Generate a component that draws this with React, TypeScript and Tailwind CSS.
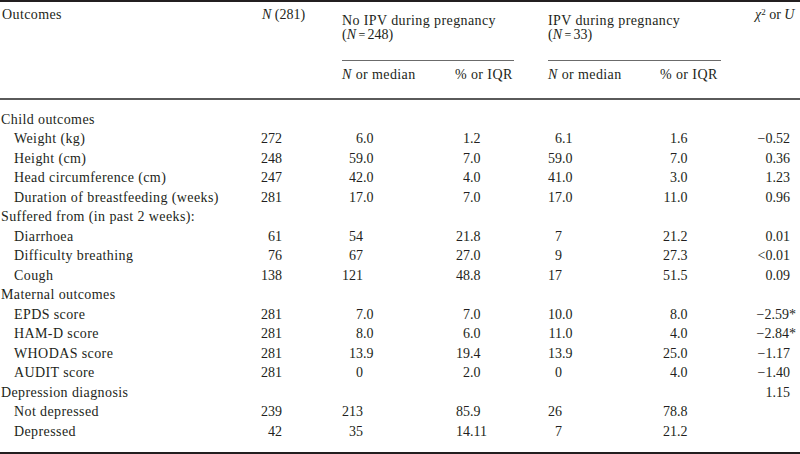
import React from "react";

type Row = {
  label: string;
  cat?: boolean;
  n?: string;
  a?: string;
  b?: string;
  c?: string;
  d?: string;
  chi?: string;
};

const rows: Row[] = [
  { label: "Child outcomes", cat: true },
  { label: "Weight (kg)", n: "272", a: "6.0", b: "1.2", c: "6.1", d: "1.6", chi: "−0.52" },
  { label: "Height (cm)", n: "248", a: "59.0", b: "7.0", c: "59.0", d: "7.0", chi: "0.36" },
  { label: "Head circumference (cm)", n: "247", a: "42.0", b: "4.0", c: "41.0", d: "3.0", chi: "1.23" },
  { label: "Duration of breastfeeding (weeks)", n: "281", a: "17.0", b: "7.0", c: "17.0", d: "11.0", chi: "0.96" },
  { label: "Suffered from (in past 2 weeks):", cat: true },
  { label: "Diarrhoea", n: "61", a: "54", b: "21.8", c: "7", d: "21.2", chi: "0.01" },
  { label: "Difficulty breathing", n: "76", a: "67", b: "27.0", c: "9", d: "27.3", chi: "<0.01" },
  { label: "Cough", n: "138", a: "121", b: "48.8", c: "17", d: "51.5", chi: "0.09" },
  { label: "Maternal outcomes", cat: true },
  { label: "EPDS score", n: "281", a: "7.0", b: "7.0", c: "10.0", d: "8.0", chi: "−2.59*" },
  { label: "HAM-D score", n: "281", a: "8.0", b: "6.0", c: "11.0", d: "4.0", chi: "−2.84*" },
  { label: "WHODAS score", n: "281", a: "13.9", b: "19.4", c: "13.9", d: "25.0", chi: "−1.17" },
  { label: "AUDIT score", n: "281", a: "0", b: "2.0", c: "0", d: "4.0", chi: "−1.40" },
  { label: "Depression diagnosis", cat: true, chi: "1.15" },
  { label: "Not depressed", n: "239", a: "213", b: "85.9", c: "26", d: "78.8" },
  { label: "Depressed", n: "42", a: "35", b: "14.11", c: "7", d: "21.2" },
];

function Num({ v, w }: { v?: string; w: string }) {
  if (!v) return <div />;
  const [i, f] = v.split(".");
  return (
    <div className="flex whitespace-nowrap">
      <span className={`${w} inline-block text-right`}>{i}</span>
      {f !== undefined && <span>.{f}</span>}
    </div>
  );
}

function Chi({ v }: { v?: string }) {
  if (!v) return <div />;
  const star = v.endsWith("*");
  const t = star ? v.slice(0, -1) : v;
  return (
    <div className="pr-[10px] text-right whitespace-nowrap">
      {t}
      {star && <span className="-mr-[6px]">*</span>}
    </div>
  );
}

export default function App() {
  return (
    <div
      className="h-[454px] w-[800px] overflow-hidden bg-white text-[14px] text-[#231f20]"
      style={{ fontFamily: '"Liberation Serif", "Times New Roman", serif' }}
    >
      <div className="h-[2px] bg-[#231f20]" />
      {/* header */}
      <div className="grid h-[96px] grid-cols-[261px_81px_206px_207px_45px] tracking-[0.4px]">
        <div className="pl-[2px] pt-[3px] leading-[19.5px]">Outcomes</div>
        <div className="pl-[1px] pt-[3px] leading-[19.5px] tracking-normal">
          <i>N</i> (281)
        </div>
        <div className="pt-[12px]">
          <div className="w-[172px] leading-[14px]">
            <div>No IPV during pregnancy</div>
            <div className="tracking-normal">
              (<i>N</i>
              <span className="text-[12px]">{"\u2009=\u2009"}</span>248)
            </div>
          </div>
          <div className="mt-[18px] h-[1px] w-[172px] bg-[#6b6b6b]" />
          <div className="mt-[4px] flex leading-[19.5px]">
            <div className="w-[113px]">
              <i>N</i> or median
            </div>
            <div>% or IQR</div>
          </div>
        </div>
        <div className="pt-[12px]">
          <div className="w-[173px] leading-[14px]">
            <div>IPV during pregnancy</div>
            <div className="tracking-normal">
              (<i>N</i>
              <span className="text-[12px]">{"\u2009=\u2009"}</span>33)
            </div>
          </div>
          <div className="mt-[18px] h-[1px] w-[173px] bg-[#6b6b6b]" />
          <div className="mt-[4px] flex leading-[19.5px]">
            <div className="w-[112px]">
              <i>N</i> or median
            </div>
            <div>% or IQR</div>
          </div>
        </div>
        <div className="pt-[3px] leading-[19.5px] whitespace-nowrap tracking-normal">
          <i>χ</i>
          <sup className="text-[9px]">2</sup> or <i>U</i>
        </div>
      </div>
      <div className="h-[2px] bg-[#5a5a5a]" />
      {/* body */}
      <div className="pt-[9.5px] pb-[11px] leading-[19.5px]">
        {rows.map((r) => (
          <div
            key={r.label}
            className="grid h-[19.5px] grid-cols-[261px_81px_113px_93px_112px_95px_45px]"
          >
            <div
              className={`${r.cat ? "pl-[1px]" : "pl-[14px]"} whitespace-nowrap tracking-[0.4px]`}
            >
              {r.label}
            </div>
            <Num v={r.n} w="w-[21px]" />
            <Num v={r.a} w="w-[21px]" />
            <Num v={r.b} w="w-[15px]" />
            <Num v={r.c} w="w-[14px]" />
            <Num v={r.d} w="w-[17px]" />
            <Chi v={r.chi} />
          </div>
        ))}
      </div>
      <div className="h-[2px] bg-[#231f20]" />
    </div>
  );
}
